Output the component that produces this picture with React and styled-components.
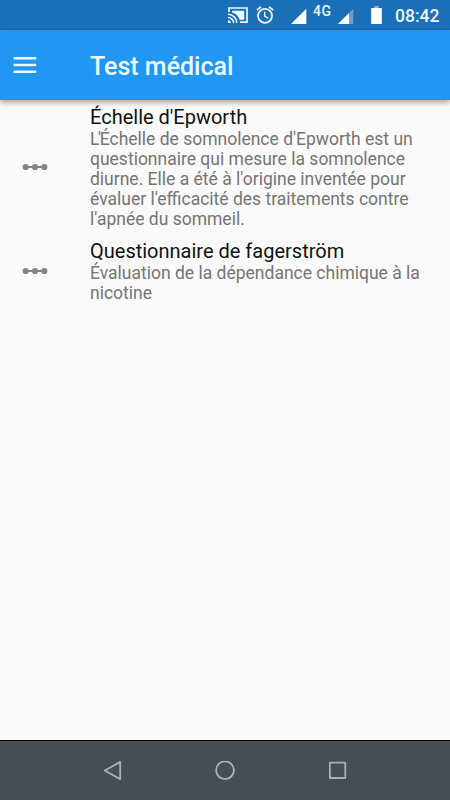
import React from 'react';
import styled, { createGlobalStyle } from 'styled-components';

const tests = [
  {
    title: "Échelle d'Epworth",
    tightStart: true,
    description:
      "L'Échelle de somnolence d'Epworth est un questionnaire qui mesure la somnolence diurne. Elle a été à l'origine inventée pour évaluer l'efficacité des traitements contre l'apnée du sommeil.",
  },
  {
    title: 'Questionnaire de fagerström',
    description: 'Évaluation de la dépendance chimique à la nicotine',
  },
];

const CastIcon = () => (
  <svg width="20" height="17" viewBox="0 0 20 17" fill="none" stroke="#e9f8fc">
    <path d="M1 5V1H19V15.2H12" strokeWidth="1.7" />
    <path d="M4 3.8H16.2V12.8H11.5C10.5 9 7.8 6.4 4 5.2Z" fill="#e9f8fc" stroke="none" />
    <path d="M0 7.3A8.8 8.8 0 0 1 8.8 16.1M0 10.5A5.6 5.6 0 0 1 5.6 16.1" strokeWidth="1.6" />
    <path d="M0 13.3A2.8 2.8 0 0 1 2.8 16.1H0Z" fill="#e9f8fc" stroke="none" />
  </svg>
);

const AlarmIcon = () => (
  <svg width="18" height="18" viewBox="0 0 18 18" fill="none" stroke="#e9f8fc">
    <circle cx="9" cy="9.8" r="7" strokeWidth="1.8" />
    <path d="M0.8 4.1L5 0.7M17.2 4.1L13 0.7" strokeWidth="1.8" />
    <path d="M8.7 5.8V10.2L12 12.2" strokeWidth="1.4" />
  </svg>
);

const SignalIcon = ({ weak }) => (
  <svg width="16" height="16" viewBox="0 0 16 16" fill="#fff">
    <path d="M0 16L15.3 0.7V16Z" opacity={weak ? 0.35 : 1} />
    {weak && <path d="M0 16L11 5V16Z" />}
  </svg>
);

const BatteryIcon = () => (
  <svg width="11" height="18" viewBox="0 0 11 18" fill="#fff">
    <path d="M3.3 0H7.7V2H3.3Z" opacity="0.45" />
    <path d="M0.2 2H10.8V18H0.2Z" />
  </svg>
);

const MenuIcon = () => (
  <svg width="24" height="18" viewBox="0 0 24 18" stroke="#e9fbff" strokeWidth="2.4">
    <path d="M0.6 2.2H23.2M0.6 9H23.2M0.6 15.8H23.2" />
  </svg>
);

const LinearScaleIcon = () => (
  <svg width="26" height="8" viewBox="0 0 26 8" fill="#858585">
    <path d="M3 3H23V5H3Z" />
    <circle cx="3.7" cy="4" r="3.1" />
    <circle cx="13" cy="4" r="3.1" />
    <circle cx="22.3" cy="4" r="3.1" />
  </svg>
);

const App = () => {
  return (
    <>
      <GlobalStyle />
      <Screen>
        <StatusBar>
          <CastIcon />
          <AlarmSlot>
            <AlarmIcon />
          </AlarmSlot>
          <SignalIcon />
          <Network>4G</Network>
          <SignalIcon weak />
          <BatterySlot>
            <BatteryIcon />
          </BatterySlot>
          <Clock>08:42</Clock>
        </StatusBar>
        <AppBar>
          <MenuButton aria-label="Menu">
            <MenuIcon />
          </MenuButton>
          <h1>Test médical</h1>
        </AppBar>
        <List>
          {tests.map((test) => (
            <Item key={test.title}>
              <Leading>
                <LinearScaleIcon />
              </Leading>
              <div>
                <ItemTitle>{test.title}</ItemTitle>
                <Description $tightStart={test.tightStart}>{test.description}</Description>
              </div>
            </Item>
          ))}
        </List>
        <NavBar>
          <svg width="20" height="20" viewBox="0 0 20 20">
            <path d="M1.8 9.5L17.2 0.9V18.1Z" />
          </svg>
          <svg width="20" height="20" viewBox="0 0 20 20">
            <circle cx="10" cy="9.2" r="8.9" />
          </svg>
          <svg width="20" height="20" viewBox="0 0 20 20">
            <rect x="1.9" y="1.6" width="15.4" height="15.4" />
          </svg>
        </NavBar>
      </Screen>
    </>
  );
};

const GlobalStyle = createGlobalStyle`
  body {
    margin: 0;
    font-family: Roboto, sans-serif;
  }

  h1, h2, p {
    margin: 0;
  }
`;

const Screen = styled.div`
  width: 450px;
  height: 800px;
  display: flex;
  flex-direction: column;
  overflow: hidden;
  background-color: #fafafa;
`;

const StatusBar = styled.div`
  height: 30px;
  box-sizing: border-box;
  flex-shrink: 0;
  display: flex;
  align-items: flex-start;
  padding: 7px 0 0 228px;
  background-color: #1a6fb7;

  svg {
    flex-shrink: 0;
  }

  > svg:not(:first-child) {
    margin-top: 1px;
  }
`;

const AlarmSlot = styled.div`
  display: flex;
  margin: -1px 17px 0 8px;
`;

const Network = styled.span`
  width: 25px;
  margin: -4px 0 0 6px;
  color: #e9f8fc;
  font-size: 14px;
  font-weight: 500;
  line-height: 16px;
  letter-spacing: 0.5px;
`;

const BatterySlot = styled.div`
  display: flex;
  margin: -1px 13px 0 17px;
`;

const Clock = styled.span`
  margin-top: -2px;
  color: #e9f8fc;
  font-size: 17.5px;
  font-weight: 500;
  line-height: 22px;
`;

const AppBar = styled.header`
  height: 70px;
  flex-shrink: 0;
  display: flex;
  align-items: center;
  z-index: 1;
  background-color: #2196f3;
  box-shadow: 0 2px 6px rgba(0, 0, 0, 0.4);

  h1 {
    color: #e9fbff;
    font-size: 25px;
    font-weight: 500;
    line-height: 30px;
    padding-top: 3px;
  }
`;

const MenuButton = styled.button`
  width: 90px;
  padding: 0 0 0 13px;
  border: none;
  background: none;
  display: flex;
`;

const List = styled.main`
  flex: 1;
`;

const Item = styled.div`
  display: flex;
  align-items: center;
  padding: 5px 20px 5px 22px;
`;

const Leading = styled.div`
  width: 68px;
  flex-shrink: 0;
  display: flex;
`;

const ItemTitle = styled.h2`
  color: #111;
  font-size: 20px;
  font-weight: 400;
  line-height: 24px;
`;

// tightStart pulls an opening L' together
const Description = styled.p`
  color: #757575;
  font-size: 17.5px;
  line-height: 20px;

  &::first-letter {
    letter-spacing: ${(props) => (props.$tightStart ? '-1.4px' : 'normal')};
  }
`;

const NavBar = styled.nav`
  height: 60px;
  box-sizing: border-box;
  flex-shrink: 0;
  display: flex;
  justify-content: center;
  align-items: center;
  gap: 92.5px;
  border-top: 1px solid #000;
  background-color: #464d53;

  svg {
    fill: none;
    stroke: #a9b1b4;
    stroke-width: 1.8;
    stroke-linejoin: round;
  }
`;

export default App;
